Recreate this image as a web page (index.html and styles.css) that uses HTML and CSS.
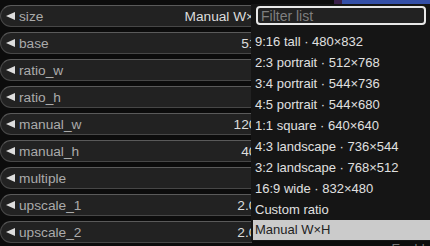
FILE: index.html
```html
<!DOCTYPE html>
<html lang="en">
<head>
    <meta charset="UTF-8">
    <meta name="viewport" content="width=device-width, initial-scale=1.0">
    <title>Size node</title>
    <link rel="stylesheet" href="styles.css">
</head>
<body>
    <div class="top-strip">
        <div class="strip-purple"></div>
        <div class="strip-blue"></div>
    </div>
    <div class="widgets">
        <!-- node widgets, values run under the open menu -->
        <div class="widget"><span class="arrow"></span><span class="label">size</span><span class="value">Manual W×H</span></div>
        <div class="widget"><span class="arrow"></span><span class="label">base</span><span class="value">512</span></div>
        <div class="widget"><span class="arrow"></span><span class="label">ratio_w</span><span class="value">1</span></div>
        <div class="widget"><span class="arrow"></span><span class="label">ratio_h</span><span class="value">1</span></div>
        <div class="widget"><span class="arrow"></span><span class="label">manual_w</span><span class="value">1200</span></div>
        <div class="widget"><span class="arrow"></span><span class="label">manual_h</span><span class="value">400</span></div>
        <div class="widget"><span class="arrow"></span><span class="label">multiple</span><span class="value">8</span></div>
        <div class="widget"><span class="arrow"></span><span class="label">upscale_1</span><span class="value">2.00</span></div>
        <div class="widget"><span class="arrow"></span><span class="label">upscale_2</span><span class="value">2.00</span></div>
    </div>
    <div class="footer-hint">● Enable</div>

    <div class="menu">
        <div class="filter"><span class="placeholder">Filter list</span></div>
        <div class="item">9:16 tall · 480×832</div>
        <div class="item">2:3 portrait · 512×768</div>
        <div class="item">3:4 portrait · 544×736</div>
        <div class="item">4:5 portrait · 544×680</div>
        <div class="item">1:1 square · 640×640</div>
        <div class="item">4:3 landscape · 736×544</div>
        <div class="item">3:2 landscape · 768×512</div>
        <div class="item">16:9 wide · 832×480</div>
        <div class="item">Custom ratio</div>
        <div class="item selected">Manual W×H</div>
    </div>
</body>
</html>
```

FILE: styles.css
```css
body {
    margin: 0;
    width: 430px;
    height: 246px;
    overflow: hidden;
    position: relative;
    background-color: #0c0c0c;
    font-family: "Liberation Sans", Arial, sans-serif;
    font-size: 13px;
}

.top-strip {
    position: absolute;
    top: 0;
    left: 334px;
    display: flex;
    height: 4px;
}

.strip-purple {
    width: 8px;
    background-color: #3a1f4a;
}

.strip-blue {
    width: 88px;
    background-color: #3550a8;
}

/* clipped where the open menu starts */
.widgets {
    display: flex;
    flex-direction: column;
    gap: 5px;
    width: 252px;
    overflow: hidden;
    padding-top: 5px;
    font-size: 13.7px;
}

.widget {
    display: flex;
    align-items: center;
    flex-shrink: 0;
    box-sizing: border-box;
    width: 282px;
    height: 22px;
    padding: 0 17px 0 5px;
    border: 1px solid #474747;
    border-top-color: #5a5a5a;
    border-radius: 11px;
    background-color: #222;
}

.arrow {
    width: 0;
    height: 0;
    border-top: 4.5px solid transparent;
    border-bottom: 4.5px solid transparent;
    border-right: 9px solid #ddd;
    margin-right: 4px;
}

.label {
    color: #ababab;
}

.value {
    margin-left: auto;
    color: #ddd;
    white-space: nowrap;
}

.footer-hint {
    position: absolute;
    left: 380px;
    top: 241px;
    color: #777;
    font-size: 13px;
    line-height: 15px;
    white-space: nowrap;
}

.menu {
    position: absolute;
    left: 251px;
    top: 4px;
    width: 179px;
    height: 237px;
    box-sizing: border-box;
    padding: 2px 0 0 2px;
    background-color: #151515;
}

.filter {
    box-sizing: border-box;
    width: 170px;
    height: 19px;
    margin: 0 0 6px 3px;
    padding-left: 3px;
    border: 2px solid #e8e8e8;
    border-radius: 4px;
    background-color: #222;
    display: flex;
    align-items: center;
}

.placeholder {
    color: #7f7f7f;
    font-size: 14px;
}

.item {
    height: 21px;
    line-height: 21px;
    padding-left: 2px;
    color: #e0e0e0;
    white-space: nowrap;
}

.item.selected {
    background-color: #cbcbcb;
    color: #222;
    height: 20px;
    line-height: 20px;
}
```
